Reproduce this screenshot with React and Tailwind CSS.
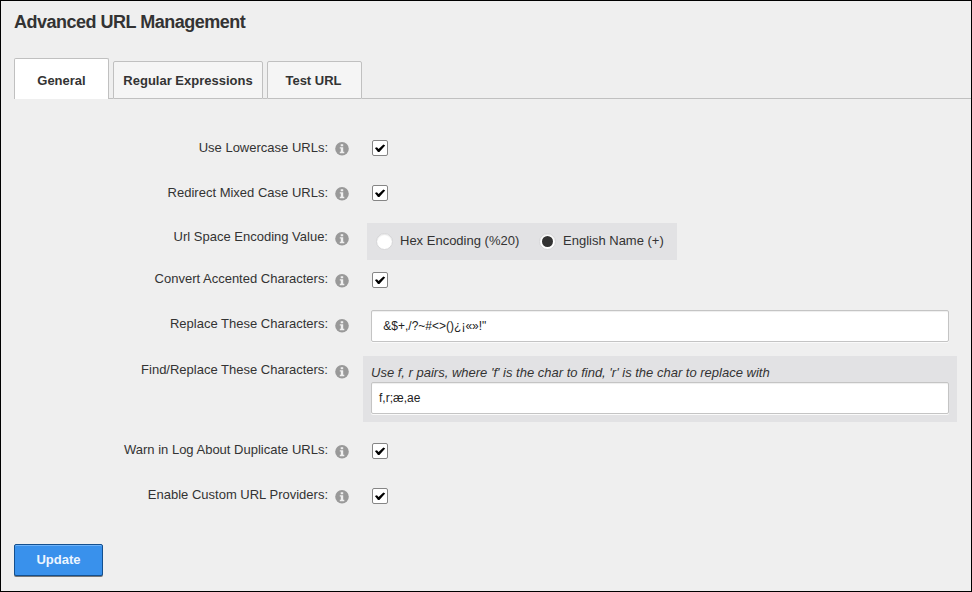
import React from "react";

function InfoIcon() {
  return (
    <svg width="14" height="14" viewBox="0 0 14 14" className="ml-[7px] shrink-0">
      <circle cx="7" cy="6.800" r="6.800" fill="#999999" />
      <path d="M5.700 2.200h2.500v2H5.700zM4.800 5.200h3.400v4.600H9.300v1.400H4.800V9.800H5.800V6.500H4.800z" fill="#efefef" />
    </svg>
  );
}

function Row({ label, height, labelTop = "mt-0", lift = "-top-px", children }) {
  return (
    <div className={`flex items-start ${height}`}>
      <div className={`flex h-[26px] w-[348px] shrink-0 items-center justify-end ${labelTop}`}>
        <span className={`relative -mt-[3px] leading-[19px] whitespace-nowrap ${lift}`}>{label}</span>
        <InfoIcon />
      </div>
      {children}
    </div>
  );
}

function Check() {
  return (
    <span className="mt-1 ml-[23px] flex size-4 items-center justify-center rounded-[2px] border border-[#858585] bg-white">
      <svg width="14" height="14" viewBox="0 0 14 14" className="shrink-0">
        <path d="M1.900 7 3.900 6.200l1.700 1.900L10.400 3.500l1.800.9L6.400 11.100H5z" fill="#000" />
      </svg>
    </span>
  );
}

function Radio({ on }) {
  return (
    <span className="flex size-[17px] shrink-0 items-center justify-center rounded-full border border-[#d6d6d8] bg-white shadow-[inset_0_1px_1px_#e8e8e8]">
      {on && <span className="size-[11px] rounded-full bg-[#333]" />}
    </span>
  );
}

const field =
  "flex h-8 w-[578px] items-center whitespace-pre rounded-[2px] border border-[#c4c4c4] bg-white text-[12px] text-[#222] shadow-[0_1px_0_#fafafa,inset_0_1px_1px_#eeeeee]";

export default function App() {
  return (
    <div className="flex h-[592px] w-[972px] flex-col overflow-hidden border border-black bg-[#efefef] font-['Liberation_Sans',Arial,sans-serif] text-[13px] text-[#333]">
      <h1 className="mt-[8px] ml-[13px] h-[26px] text-[18px] leading-[26px] font-bold tracking-[-0.5px]">
        Advanced URL Management
      </h1>
      <div className="mt-[23px] flex h-[41px] items-end font-bold">
        <div className="h-px w-[13px] bg-[#c0c0c0]/0" />
        <div className="flex h-[41px] w-[95px] items-center justify-center rounded-t-[2px] border border-b-0 border-[#c0c0c0] bg-white pt-1">
          General
        </div>
        <div className="h-px w-1 bg-[#c0c0c0]" />
        <div className="flex h-[38px] w-[150px] items-center justify-center rounded-t-[2px] border border-[#c0c0c0] bg-[#f5f5f5] pt-px">
          Regular Expressions
        </div>
        <div className="h-px w-1 bg-[#c0c0c0]" />
        <div className="flex h-[38px] w-[95px] items-center justify-center rounded-t-[2px] border border-[#c0c0c0] bg-[#f5f5f5] pt-px pr-[2px]">
          Test URL
        </div>
        <div className="h-px flex-1 bg-[#c0c0c0]" />
      </div>
      <div className="mt-[37px]">
        <Row label="Use Lowercase URLs:" height="h-[45px]" lift="top-0"><Check /></Row>
        <Row label="Redirect Mixed Case URLs:" height="h-[42px]" lift="top-0"><Check /></Row>
        <Row label="Url Space Encoding Value:" height="h-[45px]" labelTop="mt-[3px]">
          <div className="ml-[18px] flex h-[37px] w-[310px] items-center bg-[#e2e2e4] pl-[9px]">
            <Radio />
            <span className="-mt-[2px] ml-[7px] w-[139px]">Hex Encoding (%20)</span>
            <Radio on />
            <span className="-mt-[2px] ml-[7px]">English Name (+)</span>
          </div>
        </Row>
        <Row label="Convert Accented Characters:" height="h-[42px]"><Check /></Row>
        <Row label="Replace These Characters:" height="h-[46px]" labelTop="mt-[3px]">
          <div className={`${field} ml-[22px] pl-[8px]`}>{" &$+,/?~#<>()¿¡«»!\""}</div>
        </Row>
        <Row label="Find/Replace These Characters:" height="h-[83px]" labelTop="mt-[3px]">
          <div className="ml-[14px] h-[66px] w-[594px] bg-[#e2e2e4] px-2">
            <p className="h-[26px] pt-[8px] leading-[17px] whitespace-nowrap italic">
              Use f, r pairs, where 'f' is the char to find, 'r' is the char to replace with
            </p>
            <div className={`${field} pl-[7px]`}>f,r;æ,ae</div>
          </div>
        </Row>
        <Row label="Warn in Log About Duplicate URLs:" height="h-[45px]"><Check /></Row>
        <Row label="Enable Custom URL Providers:" height="h-[45px]"><Check /></Row>
      </div>
      <button className="mt-[15px] ml-[13px] flex h-8 w-[89px] shrink-0 items-center justify-center rounded-[2px] border border-[#14508f] bg-[#3991ec] font-bold text-[#edf5ff] shadow-[0_1px_0_#777,inset_0_1px_0_#70b3f8]">
        Update
      </button>
    </div>
  );
}
